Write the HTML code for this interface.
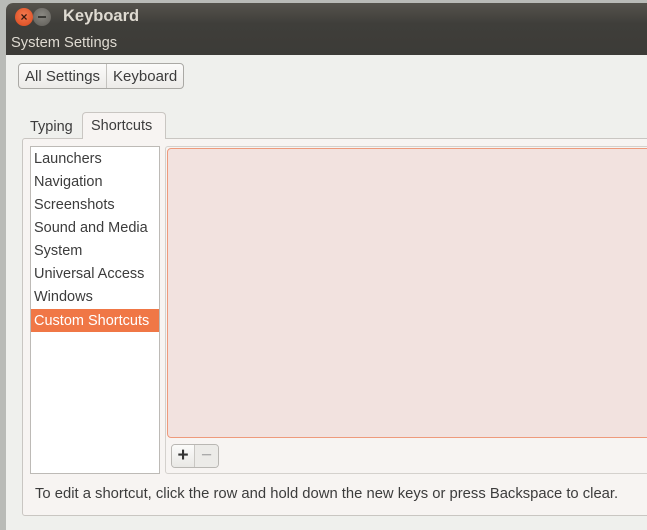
<!DOCTYPE html>
<html><head><meta charset="utf-8"><style>
*{margin:0;padding:0;box-sizing:border-box}
html,body{width:647px;height:530px;overflow:hidden}
body{background:#b9bbb7;font-family:"Liberation Sans","DejaVu Sans",sans-serif;font-size:14.5px;color:#3c3c3c;position:relative}
.win{position:absolute;left:6px;top:3px;width:641px;height:527px;background:#eff0ed;border-radius:7px 0 0 0;overflow:hidden}
.title{position:absolute;left:0;top:0;width:100%;height:52px;background:linear-gradient(#55534c,#3f3e3a 40%,#3c3b37)}
.btn{position:absolute;top:5px;width:18px;height:18px;border-radius:50%}
.close{left:9px;background:radial-gradient(circle at 50% 40%,#f47a4f,#d9471c);color:#3a1a10;font-size:12px;line-height:18px;text-align:center;font-weight:bold}
.min{left:27px;background:radial-gradient(circle at 50% 40%,#8a8882,#5e5c57)}
.min:after{content:"";position:absolute;left:5px;top:8px;width:8px;height:2px;background:#3a3935}
.ttxt{position:absolute;left:57px;top:4px;color:#dfdbd2;font-weight:bold;font-size:16.5px}
.sub{position:absolute;left:5px;top:32px;color:#dfdbd2;font-size:14.7px}
.crumb{position:absolute;left:12px;top:60px;height:26px;border:1px solid #aaa9a5;border-radius:4px;background:linear-gradient(#fbfbfa,#ecebe8);display:flex}
.crumb span{padding:4px 6px 0 6px;color:#3c3c3c;font-size:15px}
.crumb span+span{border-left:1px solid #c3c2be}
.tab{position:absolute;color:#3c3c3c}
.t1{left:18px;top:114px;padding:2px 6px 0}
.t2{left:76px;top:109px;width:84px;height:27px;border:1px solid #c9c6c2;border-bottom:none;border-radius:4px 4px 0 0;background:#f7f4f2;padding:5px 8px 0}
.nb{position:absolute;left:16px;top:135px;width:660px;height:378px;border:1px solid #c9c6c2;border-radius:3px;background:#f7f4f2}
.list{position:absolute;left:24px;top:143px;width:130px;height:328px;border:1px solid #bdbab6;background:#fff}
.list div{height:23px;padding:4px 0 0 3px;color:#3c3c3c;white-space:nowrap}
.list .sel{background:#f07746;color:#fff;margin-top:1px;height:23px}
.rp{position:absolute;left:159px;top:143px;width:500px;height:328px;border:1px solid #d4d1cd;border-radius:3px;background:#f7f4f2}
.pink{position:absolute;left:161px;top:145px;width:500px;height:290px;border:1px solid #ee9a7c;border-radius:4px;background:#f2e2df}
.pm{position:absolute;left:165px;top:441px;width:48px;height:24px;border:1px solid #b9b7b3;border-radius:4px;display:flex;overflow:hidden}
.pm span{width:24px;text-align:center;font-size:19px;line-height:22px}
.pm .p{background:linear-gradient(#fbfbfa,#e9e8e5);color:#333;font-weight:bold;border-right:1px solid #c9c7c3}
.pm .m{background:#ecebe8;color:#aaa}
.hint{position:absolute;left:29px;top:483px;font-size:14.8px;color:#3c3c3c;white-space:nowrap}
</style></head><body>
<div class="win">
<div class="title"><div class="btn close">×</div><div class="btn min"></div><div class="ttxt">Keyboard</div><div class="sub">System Settings</div></div>
<div class="crumb"><span>All Settings</span><span>Keyboard</span></div>
<div class="tab t1">Typing</div>
<div class="nb"></div>
<div class="tab t2">Shortcuts</div>
<div class="list"><div>Launchers</div><div>Navigation</div><div>Screenshots</div><div>Sound and Media</div><div>System</div><div>Universal Access</div><div>Windows</div><div class="sel">Custom Shortcuts</div></div>
<div class="rp"></div>
<div class="pink"></div>
<div class="pm"><span class="p">+</span><span class="m">−</span></div>
<div class="hint">To edit a shortcut, click the row and hold down the new keys or press Backspace to clear.</div>
</div>
</body></html>
